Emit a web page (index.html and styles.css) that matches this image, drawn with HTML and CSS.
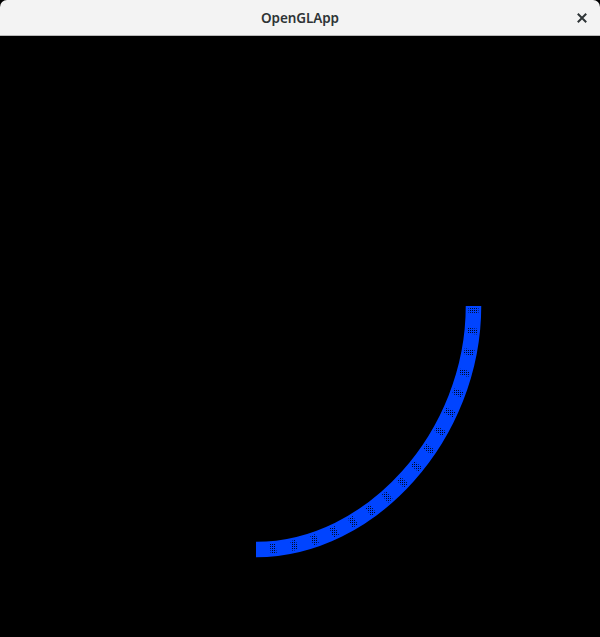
FILE: index.html
```html
<!DOCTYPE html>
<html lang="en">
<head>
<meta charset="utf-8">
<title>OpenGLApp</title>
<link rel="stylesheet" href="styles.css">
</head>
<body>
<div class="window">
  <header class="titlebar">
    <span class="title">OpenGLApp</span>
    <button class="close" aria-label="Close">
      <svg width="10" height="10" viewBox="0 0 10 10"><path d="M1.5 1.5 L8.5 8.5 M8.5 1.5 L1.5 8.5" stroke="#2e3436" stroke-width="2" stroke-linecap="square"/></svg>
    </button>
  </header>
  <main class="canvas">
    <svg class="scene" width="600" height="601" viewBox="0 36 600 601">
      <defs>
        <pattern id="dots" width="2" height="2" patternUnits="userSpaceOnUse">
          <rect x="0" y="0" width="1" height="1" fill="#000"/>
        </pattern>
      </defs>
      <path d="M 473.5 306 C 473.5 435 371.3 549.5 256 549.5" fill="none" stroke="#0044ff" stroke-width="15.5" stroke-linecap="butt"/>
      <path d="M 473.5 306 C 473.5 435 371.3 549.5 256 549.5" fill="none" stroke="url(#dots)" stroke-opacity="0.85" stroke-width="10" pathLength="340" stroke-dasharray="5.5 14.5" stroke-dashoffset="-1"/>
    </svg>
  </main>
</div>
</body>
</html>
```

FILE: styles.css
```css
html, body {
  margin: 0;
  padding: 0;
  background: #000;
}
.window {
  width: 600px;
  height: 637px;
  display: flex;
  flex-direction: column;
  background: #000;
}
.titlebar {
  height: 35px;
  flex: 0 0 35px;
  border-bottom: 1px solid #b9b9b9;
  background: #f3f3f3;
  border-radius: 7px 7px 0 0;
  display: flex;
  align-items: center;
  justify-content: center;
  position: relative;
  font-family: "Noto Sans", "DejaVu Sans", sans-serif;
}
.title {
  font-size: 13.5px;
  font-weight: 600;
  color: #2e3436;
  letter-spacing: -0.1px;
}
.close {
  position: absolute;
  right: 13px;
  top: 13px;
  width: 10px;
  height: 10px;
  padding: 0;
  border: 0;
  background: none;
  display: flex;
}
.canvas {
  flex: 1;
  background: #000;
}
.scene {
  display: block;
}
```
